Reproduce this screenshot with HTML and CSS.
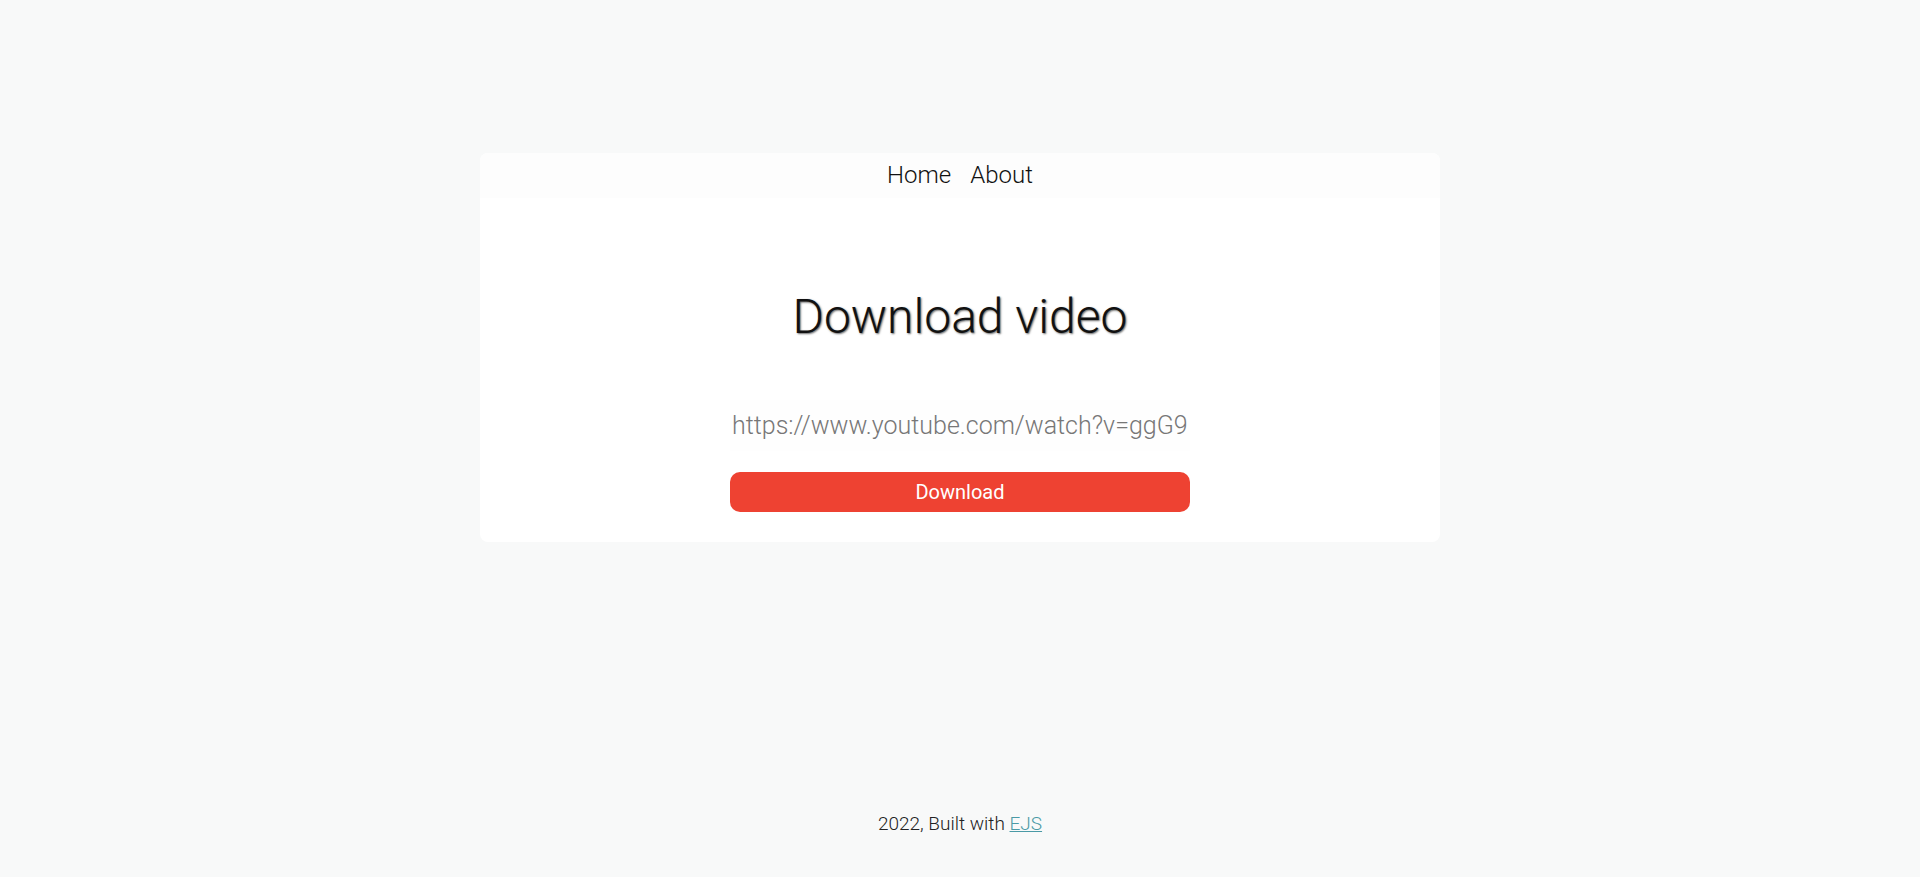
FILE: index.html
```html
<!DOCTYPE html>
<html lang="en">
<head>
<meta charset="utf-8">
<title>Download video</title>
<link rel="stylesheet" href="styles.css">
</head>
<body>
<div class="page">
  <main class="content">
    <section class="card">
      <nav class="nav">
        <a class="nav-link" href="#">Home</a>
        <a class="nav-link" href="#">About</a>
      </nav>
      <div class="card-body">
        <h1 class="title">Download video</h1>
        <form class="form">
          <input class="url-input" type="text" value="https://www.youtube.com/watch?v=ggG9LDgz8Xs">
          <button class="btn" type="button">Download</button>
        </form>
      </div>
    </section>
  </main>
  <footer class="footer">2022, Built with <a class="footer-link" href="#">EJS</a></footer>
</div>
</body>
</html>
```
FILE: styles.css
```css
html, body {
  margin: 0;
  padding: 0;
}
body {
  background: #f8f9f9;
  font-family: Roboto, "Noto Sans", sans-serif;
  font-weight: 300;
  color: #111;
}
.page {
  min-height: 877px;
  display: flex;
  flex-direction: column;
  align-items: center;
}
.content {
  flex: 1;
  padding-top: 153px;
}
.card {
  width: 960px;
  background: #ffffff;
  border-radius: 8px;
  overflow: hidden;
  padding-bottom: 30px;
}
.nav {
  height: 45px;
  background: #fdfdfd;
  display: flex;
  justify-content: center;
  align-items: center;
  gap: 19px;
}
.nav-link {
  font-size: 24px;
  font-weight: 300;
  color: #111;
  text-decoration: none;
  line-height: 28px;
  padding-bottom: 2px;
}
.card-body {
  display: flex;
  flex-direction: column;
  align-items: center;
}
.title {
  margin: 90px 0 0;
  font-size: 48px;
  font-weight: 300;
  line-height: 58px;
  color: #111;
  text-shadow: 1px 1px 2px #666;
}
.form {
  margin-top: 54px;
  display: flex;
  flex-direction: column;
  gap: 21px;
  width: 460px;
}
.url-input {
  box-sizing: border-box;
  width: 460px;
  height: 51px;
  border: none;
  outline: none;
  background: #fefefe;
  font-family: Roboto, sans-serif;
  font-weight: 300;
  font-size: 25px;
  color: #777;
  padding: 0 2px;
}
.btn {
  height: 40px;
  border: none;
  border-radius: 10px;
  background: #ee4232;
  color: #fff;
  font-family: Roboto, sans-serif;
  font-weight: 400;
  font-size: 20px;
  padding: 0;
}
.footer {
  height: 110px;
  box-sizing: border-box;
  padding-top: 45px;
  font-size: 19px;
  color: #222;
}
.footer-link {
  color: #4a9aa6;
}
```
